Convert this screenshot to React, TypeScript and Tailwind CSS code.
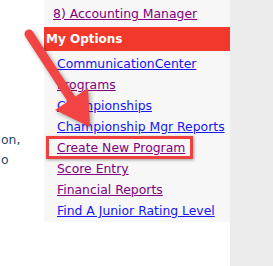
const links: { label: string; visited?: boolean; boxed?: boolean }[] = [
  { label: "CommunicationCenter" },
  { label: "Programs", visited: true },
  { label: "Championships" },
  { label: "Championship Mgr Reports" },
  { label: "Create New Program", visited: true, boxed: true },
  { label: "Score Entry", visited: true },
  { label: "Financial Reports", visited: true },
  { label: "Find A Junior Rating Level" },
];

export default function App() {
  return (
    <div className="relative flex h-[266px] w-[273px] overflow-hidden bg-white font-['DejaVu_Sans',sans-serif] text-[12.4px]">
      {/* clipped body text on the left */}
      <div className="w-[44px] shrink-0 overflow-hidden pt-[130px] pl-[1px] leading-[20px] text-[#24466b] whitespace-nowrap">
        <p>on,</p>
        <p>o</p>
      </div>

      {/* side menu */}
      <div className="flex w-[186px] shrink-0 flex-col">
        <div className="bg-[#f7f7f7]">
          <div className="mt-[-18px] pl-[9px] leading-[21px] whitespace-nowrap">
            <p>
              <a href="#" className="text-[#1515ee] underline">7) Championship Manager</a>
            </p>
            <p>
              <a href="#" className="text-[#800080] underline">8) Accounting Manager</a>
            </p>
          </div>
          <div className="mt-[3px] flex h-[24px] items-center bg-[#f2372b] pl-[2px] text-[12px] font-bold text-white">
            My Options
          </div>
          <ul className="pt-[2px] pb-[1px] leading-[21px] whitespace-nowrap">
            {links.map((l) => (
              <li key={l.label} className="relative pl-[13px]">
                <a href="#" className={l.visited ? "text-[#800080] underline" : "text-[#1515ee] underline"}>
                  {l.label}
                </a>
                {l.boxed && (
                  <span className="pointer-events-none absolute left-[2px] top-[-1px] h-[23px] w-[147px] border-[3px] border-[#ef4040] shadow-[1px_1px_3px_rgba(0,0,0,0.35)]" />
                )}
              </li>
            ))}
          </ul>
        </div>
      </div>

      <div className="flex-1 bg-[#ececec]" />

      {/* annotation arrow */}
      <svg
        className="pointer-events-none absolute left-0 top-0 drop-shadow-[2px_2px_2px_rgba(0,0,0,0.35)]"
        width="273"
        height="266"
        viewBox="0 0 273 266"
      >
        <line x1="29" y1="34" x2="74" y2="103" stroke="#f24444" strokeWidth="9" strokeLinecap="round" />
        <polygon points="90,127 88,88 55,110" fill="#f24444" />
      </svg>
    </div>
  );
}
